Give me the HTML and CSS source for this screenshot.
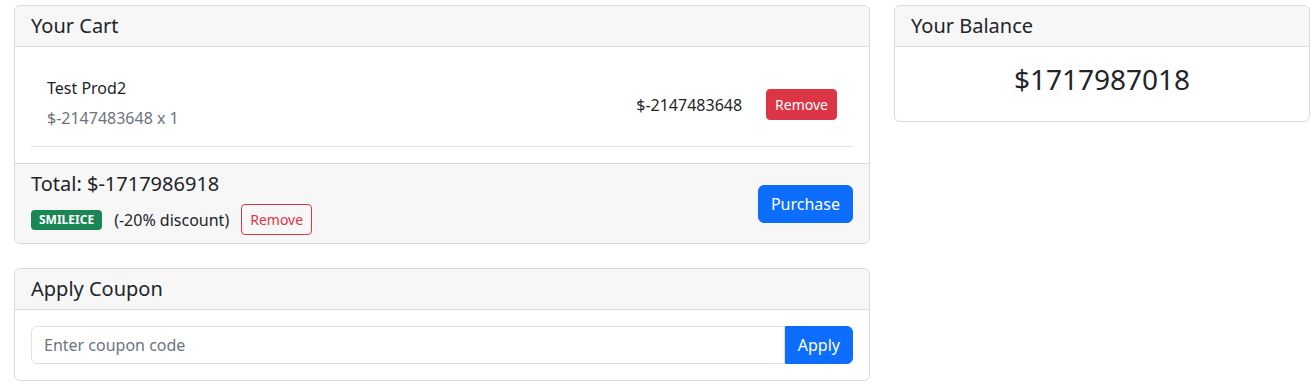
FILE: index.html
```html
<!DOCTYPE html>
<html lang="en">
<head>
    <meta charset="UTF-8">
    <meta name="viewport" content="width=device-width, initial-scale=1.0">
    <title>Cart</title>
    <link rel="stylesheet" href="styles.css">
</head>
<body>
    <div class="page">
        <div class="main-col">
            <!-- Cart -->
            <div class="card">
                <div class="card-header">
                    <h5>Your Cart</h5>
                </div>
                <div class="card-body">
                    <div class="cart-item">
                        <div class="item-info">
                            <h6>Test Prod2</h6>
                            <p class="muted">$-2147483648 x 1</p>
                        </div>
                        <div class="item-actions">
                            <span class="item-price">$-2147483648</span>
                            <button class="btn btn-sm btn-danger">Remove</button>
                        </div>
                    </div>
                </div>
                <div class="card-footer">
                    <div class="footer-info">
                        <h5 class="total">Total: $-1717986918</h5>
                        <div class="coupon-row">
                            <span class="badge">SMILEICE</span>
                            <span>(-20% discount)</span>
                            <button class="btn btn-sm btn-outline-danger">Remove</button>
                        </div>
                    </div>
                    <button class="btn btn-primary">Purchase</button>
                </div>
            </div>

            <!-- Coupon -->
            <div class="card">
                <div class="card-header">
                    <h5>Apply Coupon</h5>
                </div>
                <div class="card-body">
                    <div class="input-group">
                        <input type="text" class="form-control" placeholder="Enter coupon code">
                        <button class="btn btn-primary">Apply</button>
                    </div>
                </div>
            </div>
        </div>

        <div class="side-col">
            <div class="card">
                <div class="card-header">
                    <h5>Your Balance</h5>
                </div>
                <div class="card-body balance">
                    <h3>$1717987018</h3>
                </div>
            </div>
        </div>
    </div>
</body>
</html>
```

FILE: styles.css
```css
* {
    margin: 0;
    padding: 0;
    box-sizing: border-box;
}

body {
    font-family: "Noto Sans", "Open Sans", sans-serif;
    font-size: 16px;
    line-height: 1.5;
    color: #212529;
    background: #fff;
}

.page {
    display: grid;
    grid-template-columns: 856px 416px;
    gap: 24px;
    align-items: start;
    padding: 5px 0 0 14px;
}

.main-col {
    display: flex;
    flex-direction: column;
    gap: 24px;
}

.card {
    border: 1px solid #dadada;
    border-radius: 6px;
    background: #fff;
    overflow: hidden;
}

.card-header {
    padding: 8px 16px;
    background: #f7f7f7;
    border-bottom: 1px solid #dadada;
}

h5 {
    font-size: 20px;
    font-weight: 400;
    line-height: 1.2;
}

h6 {
    font-size: 16px;
    font-weight: 400;
    line-height: 1.2;
    margin-bottom: 8px;
}

h3 {
    font-size: 28px;
    font-weight: 400;
    line-height: 1.2;
    margin-bottom: 8px;
}

.card-body {
    padding: 16px;
}

.cart-item {
    display: flex;
    align-items: center;
    justify-content: space-between;
    padding: 16px;
    border-bottom: 1px solid #dee2e6;
}

.muted {
    color: #6c757d;
}

.item-actions {
    display: flex;
    align-items: center;
    gap: 24px;
}

.card-footer {
    display: flex;
    align-items: center;
    justify-content: space-between;
    padding: 8px 16px;
    background: #f7f7f7;
    border-top: 1px solid #dadada;
}

.total {
    margin-bottom: 8px;
}

.coupon-row {
    display: flex;
    align-items: center;
    gap: 12px;
}

.badge {
    display: inline-block;
    padding: 4px 8px;
    font-size: 12px;
    font-weight: 700;
    line-height: 1;
    color: #fff;
    background: #198754;
    border-radius: 4px;
}

.btn {
    font-family: inherit;
    font-size: 16px;
    line-height: 1.5;
    padding: 6px 12px;
    border: 1px solid transparent;
    border-radius: 6px;
    cursor: pointer;
}

.btn-sm {
    font-size: 14px;
    padding: 4px 8px;
    border-radius: 4px;
}

.btn-danger {
    background: #dc3545;
    border-color: #dc3545;
    color: #fff;
}

.btn-outline-danger {
    background: transparent;
    border-color: #dc3545;
    color: #dc3545;
}

.btn-primary {
    background: #0d6efd;
    border-color: #0d6efd;
    color: #fff;
}

.input-group {
    display: flex;
}

.form-control {
    flex: 1;
    font-family: inherit;
    font-size: 16px;
    line-height: 1.5;
    padding: 6px 12px;
    border: 1px solid #dee2e6;
    border-radius: 6px 0 0 6px;
    color: #212529;
    outline: none;
}

.form-control::placeholder {
    color: #6c757d;
}

.input-group .btn {
    border-radius: 0 6px 6px 0;
}

.balance {
    text-align: center;
}
```
